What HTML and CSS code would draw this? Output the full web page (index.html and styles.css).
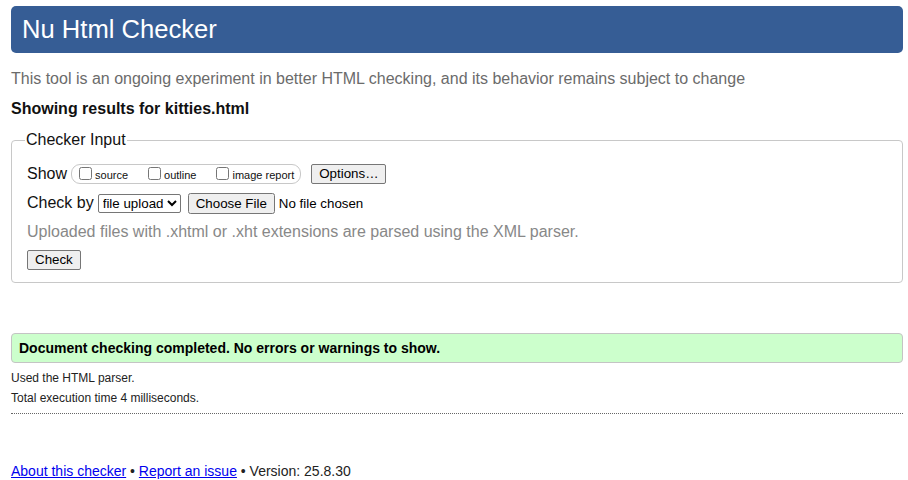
FILE: index.html
```html
<!DOCTYPE html>
<html lang="en">
<head>
<meta charset="utf-8">
<title>Showing results for kitties.html - Nu Html Checker</title>
<link rel="stylesheet" href="styles.css">
</head>
<body>
<h1 class="title">Nu Html Checker</h1>
<p class="intro">This tool is an ongoing experiment in better HTML checking, and its behavior remains subject to change</p>
<p class="results-for">Showing results for kitties.html</p>
<form class="input-form">
<fieldset class="checker">
<legend class="legend">Checker Input</legend>
<div class="row row-show">
<span class="row-label">Show</span>
<span class="checkboxes">
<label class="cb cb-gap"><input type="checkbox" class="cbox"><span class="cb-text">source</span></label>
<label class="cb cb-gap"><input type="checkbox" class="cbox"><span class="cb-text">outline</span></label>
<label class="cb"><input type="checkbox" class="cbox"><span class="cb-text">image report</span></label>
</span>
<button type="button" class="btn btn-options">Options…</button>
</div>
<div class="row row-by">
<span class="row-label">Check by</span>
<select class="select"><option>file upload</option></select>
<input type="file" class="file">
</div>
<p class="note">Uploaded files with .xhtml or .xht extensions are parsed using the XML parser.</p>
<div class="row row-check">
<button type="button" class="btn btn-check">Check</button>
</div>
</fieldset>
</form>
<div class="success">Document checking completed. No errors or warnings to show.</div>
<p class="details">Used the HTML parser.</p>
<p class="details">Total execution time 4 milliseconds.</p>
<hr class="rule">
<p class="footer"><a href="#">About this checker</a> • <a href="#">Report an issue</a> • Version: 25.8.30</p>
</body>
</html>
```
FILE: styles.css
```css
html, body {
  background: #fff;
}
body {
  margin: 0;
  padding: 6px 5px 0 11px;
  font-family: "Liberation Sans", Arial, sans-serif;
  font-size: 16px;
  color: #111;
}
.title {
  margin: 0;
  background: #365d95;
  color: #fff;
  font-weight: normal;
  font-size: 25.6px;
  line-height: 29px;
  padding: 9px 11px;
  border-radius: 5px;
}
.intro {
  margin: 17px 0 0;
  line-height: 18px;
  color: #6b6b6b;
}
.results-for {
  margin: 12px 0 0;
  line-height: 18px;
  font-weight: bold;
  color: #111;
}
.input-form {
  margin: 13px 0 0;
}
.checker {
  margin: 0;
  border: 1px solid #c8c8c8;
  border-radius: 4px;
  padding: 4px 15px 11px;
}
.legend {
  padding: 0 1px;
  margin-left: -2px;
  line-height: 18px;
}
.row {
  display: flex;
  align-items: center;
}
.row-show {
  height: 22px;
  margin-top: 10px;
}
.row-label {
  margin-right: 4px;
}
.checkboxes {
  display: inline-flex;
  align-items: flex-start;
  box-sizing: border-box;
  height: 20px;
  border: 1px solid #c8c8c8;
  border-radius: 9px;
  padding: 1px 6px 0 6px;
  font-size: 11px;
}
.cb {
  display: inline-flex;
  align-items: flex-end;
  height: 14px;
}
.cb-gap {
  margin-right: 19px;
}
.cbox {
  width: 13px;
  height: 13px;
  margin: 0 3px 0 1px;
}
.cb-text {
  display: block;
  line-height: 11px;
  position: relative;
  top: 1px;
}
.btn {
  font-family: "Liberation Sans", Arial, sans-serif;
  font-size: 13.333px;
  color: #000;
  background: #efefef;
  border: 1px solid #767676;
  border-radius: 2px;
  line-height: 16px;
}
.btn-options {
  margin-left: 10px;
  height: 20px;
  padding: 0 6px 0 7px;
}
.row-by {
  height: 22px;
  margin-top: 7px;
}
.select {
  font-family: "Liberation Sans", Arial, sans-serif;
  font-size: 13.333px;
  height: 19px;
  padding: 0;
  border: 1px solid #767676;
  border-radius: 2px;
  background: #fff;
  color: #000;
  margin-right: 7px;
}
.file {
  font-family: "Liberation Sans", Arial, sans-serif;
  font-size: 13.333px;
  color: #000;
}
.note {
  margin: 9px 0 0;
  line-height: 18px;
  color: #888;
}
.row-check {
  margin-top: 8px;
  height: 22px;
}
.btn-check {
  height: 20px;
  padding: 0 7px;
}
.success {
  margin-top: 50px;
  background: #ccffcc;
  border: 1px solid #c4c4c4;
  border-radius: 4px;
  padding: 6px 7px;
  font-size: 14px;
  font-weight: bold;
  line-height: 16px;
  color: #000;
}
.details {
  margin: 8px 0 0;
  font-size: 12px;
  line-height: 14px;
  color: #222;
}
.details + .details {
  margin-top: 6px;
}
.rule {
  margin: 8px 0 0;
  border: 0;
  border-top: 1px dotted #666;
  height: 0;
}
.footer {
  margin: 49px 0 0;
  font-size: 14px;
  line-height: 16px;
  color: #222;
}
.footer a {
  color: #0000ee;
}
```
